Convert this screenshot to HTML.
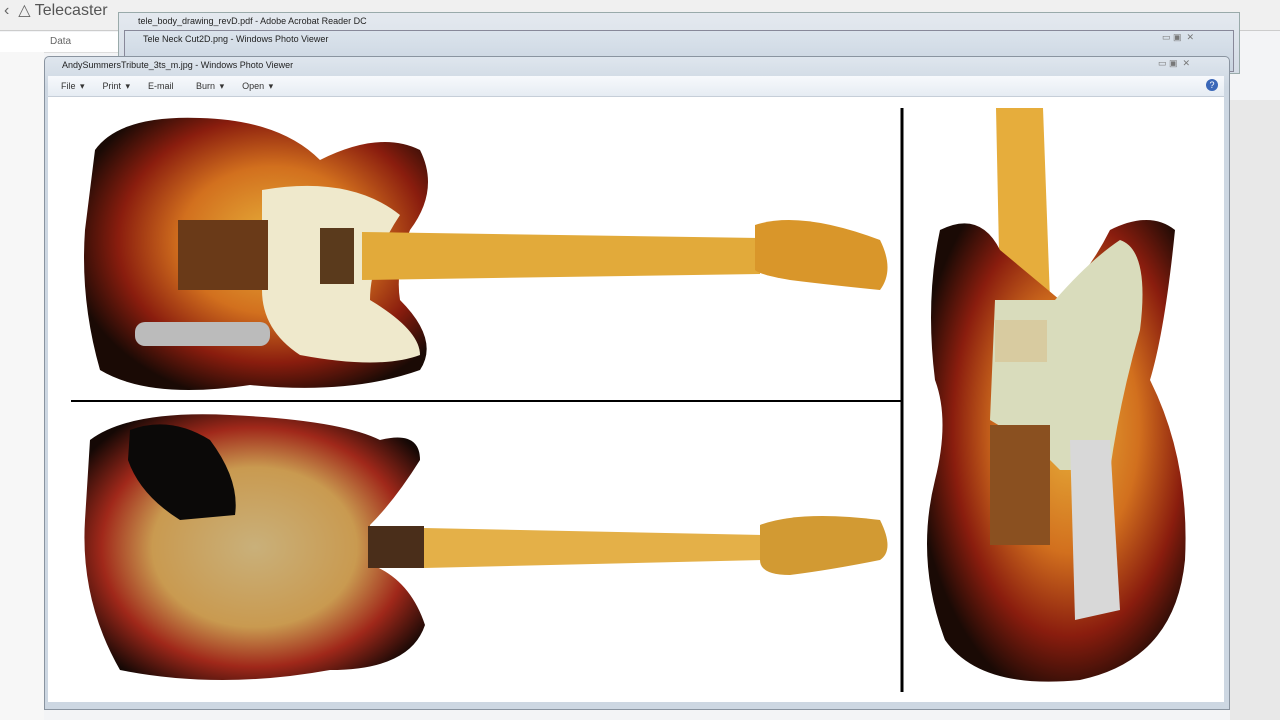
<!DOCTYPE html>
<html><head><meta charset="utf-8"><style>
body{margin:0;width:1280px;height:720px;overflow:hidden;background:#f3f4f6;font-family:"Liberation Sans",sans-serif;position:relative}
.a{position:absolute}
</style></head><body>
<div class="a" style="left:0;top:0;width:1280px;height:30px;background:#f0f0f0;border-bottom:1px solid #ccc"></div>
<div class="a" style="left:4px;top:0;font-size:16px;color:#666">‹ &nbsp;△ <span style="color:#555">Telecaster</span></div>
<div class="a" style="left:0;top:32px;width:125px;height:20px;background:#fff;border-bottom:1px solid #ddd"></div>
<div class="a" style="left:50px;top:36px;font-size:10px;color:#666">Data</div>
<div class="a" style="left:0;top:52px;width:44px;height:668px;background:#f7f7f7"></div>
<div class="a" style="left:118px;top:12px;width:1120px;height:60px;background:linear-gradient(#e4e9ef,#d4dce6);border:1px solid #9aa"></div>
<div class="a" style="left:138px;top:16px;font-size:9px;color:#222">tele_body_drawing_revD.pdf - Adobe Acrobat Reader DC</div>
<div class="a" style="left:124px;top:30px;width:1108px;height:40px;background:linear-gradient(#dbe3ec,#c9d4e0);border:1px solid #889"></div>
<div class="a" style="left:143px;top:34px;font-size:9px;color:#222">Tele Neck Cut2D.png - Windows Photo Viewer</div>
<div class="a" style="left:1162px;top:32px;font-size:9px;color:#777">▭ ▣ &nbsp;✕</div>
<div class="a" style="left:1230px;top:100px;width:50px;height:620px;background:#e8e8e8"></div>
<div class="a" style="left:44px;top:56px;width:1184px;height:652px;background:linear-gradient(#dfe6ee,#cdd7e2 30px);border:1px solid #8a94a0;border-radius:5px 5px 0 0"></div>
<div class="a" style="left:62px;top:60px;font-size:9px;color:#222">AndySummersTribute_3ts_m.jpg - Windows Photo Viewer</div>
<div class="a" style="left:1158px;top:58px;font-size:9px;color:#777">▭ ▣ &nbsp;✕</div>
<div class="a" style="left:48px;top:76px;width:1176px;height:20px;background:linear-gradient(#f7f9fc,#e6ecf3);border-bottom:1px solid #c6ced8"></div>
<div class="a" style="left:61px;top:81px;font-size:9px;color:#333;word-spacing:2px">File ▾ &nbsp;&nbsp; Print ▾ &nbsp;&nbsp; E-mail &nbsp;&nbsp;&nbsp; Burn ▾ &nbsp;&nbsp; Open ▾</div>
<div class="a" style="left:1206px;top:79px;width:12px;height:12px;border-radius:6px;background:#3a67b8;color:#fff;font-size:9px;text-align:center;line-height:12px">?</div>
<div class="a" style="left:48px;top:97px;width:1176px;height:605px;background:#fff"></div>
<svg class="a" style="left:0;top:0" width="1280" height="720">
<defs>
<radialGradient id="sb" cx="0.55" cy="0.45" r="0.6"><stop offset="0" stop-color="#e7b03a"/><stop offset="0.45" stop-color="#d2701e"/><stop offset="0.75" stop-color="#8a1d0e"/><stop offset="1" stop-color="#1a0a05"/></radialGradient>
<radialGradient id="sb2" cx="0.5" cy="0.5" r="0.6"><stop offset="0" stop-color="#c9b07a"/><stop offset="0.5" stop-color="#c99a50"/><stop offset="0.75" stop-color="#a0281a"/><stop offset="1" stop-color="#150805"/></radialGradient>
</defs>
<line x1="902" y1="108" x2="902" y2="692" stroke="#000" stroke-width="3"/>
<line x1="71" y1="401" x2="902" y2="401" stroke="#000" stroke-width="2"/>
<!-- top guitar -->
<path d="M95 150 Q120 115 200 118 Q280 120 320 160 Q380 130 420 150 Q440 190 410 230 Q395 270 400 300 Q440 340 420 370 Q350 395 250 385 Q150 400 100 370 Q80 300 85 230 Z" fill="url(#sb)"/>
<path d="M262 190 Q350 175 400 215 Q370 260 370 300 Q420 330 420 355 Q380 370 300 355 Q262 330 262 290 Z" fill="#efe9cc"/>
<rect x="178" y="220" width="90" height="70" fill="#6a3a18"/>
<rect x="320" y="228" width="34" height="56" fill="#5a3a1c"/>
<rect x="135" y="322" width="135" height="24" rx="10" fill="#bbb"/>
<path d="M362 232 L760 238 L760 274 L362 280 Z" fill="#e2aa3a"/>
<path d="M755 225 Q800 210 880 240 Q895 270 880 290 Q830 285 790 280 Q760 275 755 270 Z" fill="#d9962a"/>
<!-- bottom guitar -->
<path d="M90 440 Q130 410 230 415 Q340 420 380 440 Q420 430 420 460 Q395 500 370 525 L372 565 Q410 580 425 625 Q410 670 330 670 Q220 690 120 670 Q80 600 85 520 Z" fill="url(#sb2)"/>
<path d="M130 430 Q170 415 210 440 Q240 480 235 515 L180 520 Q140 495 128 460 Z" fill="#0b0908"/>
<rect x="368" y="526" width="56" height="42" fill="#4a2e1a"/>
<path d="M424 528 L765 535 L765 560 L424 568 Z" fill="#e4b048"/>
<path d="M760 525 Q800 510 880 520 Q895 550 880 560 Q830 570 790 575 Q760 575 760 560 Z" fill="#d29a33"/>
<!-- right guitar -->
<path d="M996 108 L1043 108 L1050 300 L1000 300 Z" fill="#e6ad3c"/>
<path d="M940 230 Q980 210 1000 250 L1060 300 Q1090 270 1110 230 Q1150 210 1175 230 Q1165 330 1150 380 Q1190 460 1185 560 Q1175 660 1080 680 Q980 690 945 640 Q915 560 935 480 Q950 420 935 380 Q925 300 940 230 Z" fill="url(#sb)"/>
<path d="M995 300 L1055 300 Q1090 260 1120 240 Q1150 250 1140 330 Q1120 400 1110 470 L1060 470 L1040 450 L990 420 Z" fill="#d9dcbc"/>
<rect x="995" y="320" width="52" height="42" fill="#d8cba0"/>
<rect x="990" y="425" width="60" height="120" fill="#8a5020"/>
<path d="M1070 440 L1110 440 L1120 610 L1075 620 Z" fill="#d8d8d8"/>
</svg>
</body></html>
